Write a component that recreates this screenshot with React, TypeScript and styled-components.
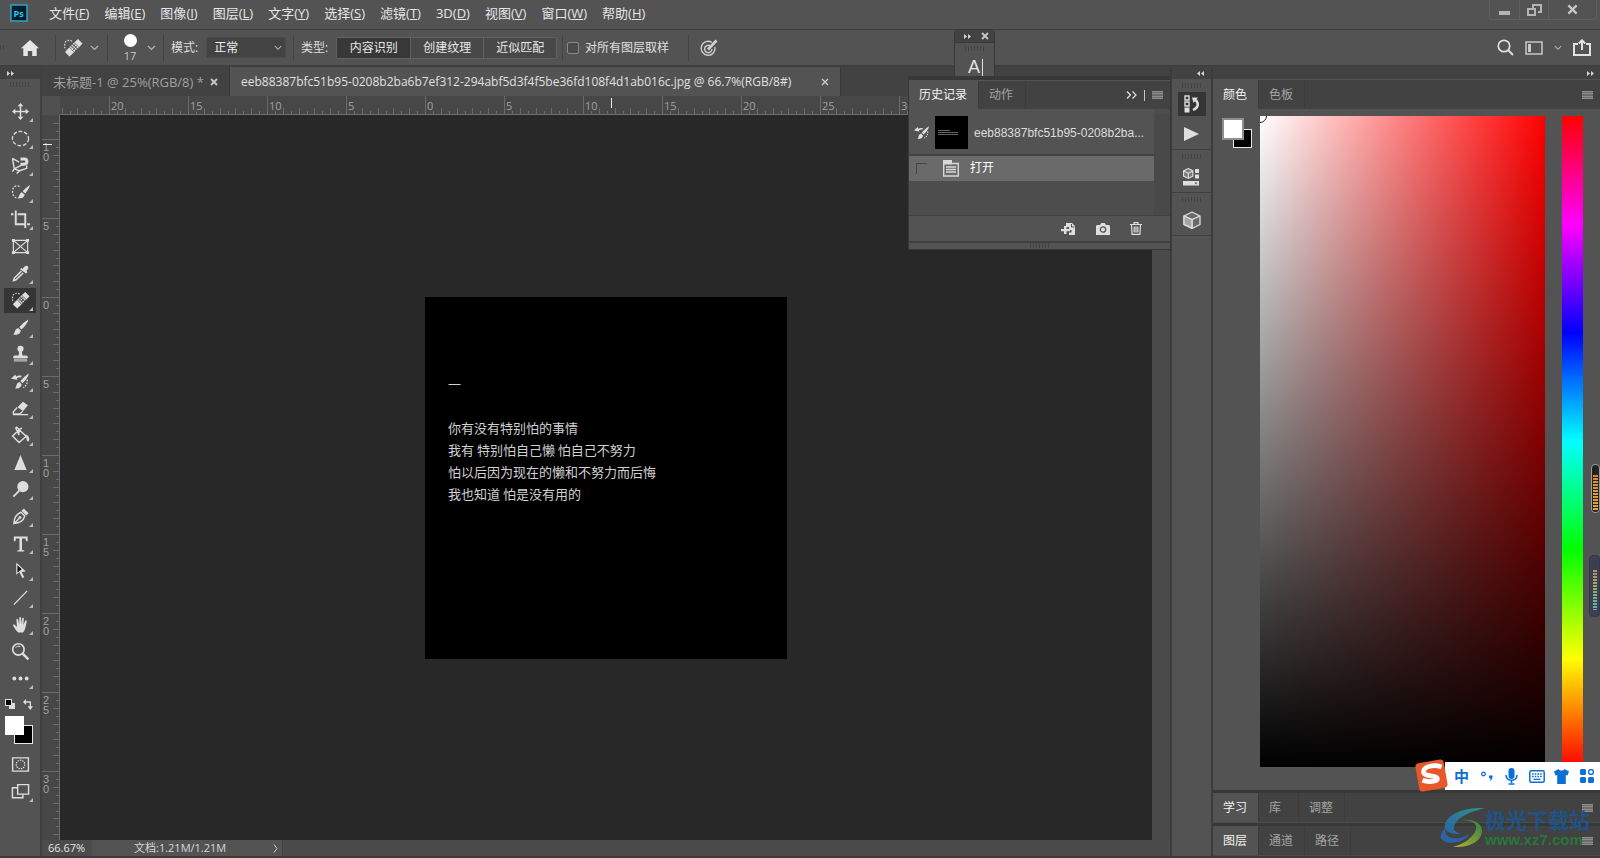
import React from "react";
import styled, { createGlobalStyle, css } from "styled-components";

const GlobalStyle = createGlobalStyle`
  *, *::before, *::after { box-sizing: border-box; }
  body { margin: 0; background: #535353; }
  button, select, input { font: inherit; color: inherit; margin: 0; }
  button { border: 0; background: none; padding: 0; cursor: default; }
  svg { display: block; flex: none; }
`;

const Shell = styled.div`
  position: relative;
  display: flex;
  flex-direction: column;
  height: 100vh;
  overflow: hidden;
  background: #535353;
  border-bottom: 2px solid #3a3a3a;
  color: #dcdcdc;
  font: 12px/16px "Open Sans", "Noto Sans CJK SC", sans-serif;
`;

/* ---------- menu bar ---------- */

const MenuBar = styled.header`
  display: flex;
  align-items: center;
  height: 30px;
  flex: none;
  padding: 0 0 3px 10px;
  border-bottom: 1px solid #3d3d3d;
`;

const Menus = styled.nav`
  display: flex;
  gap: 15px;
  flex: 1;
  margin-left: 21px;
  font-size: 13px;
  line-height: 18px;
  color: #e6e6e6;
`;

const WindowControls = styled.div`
  display: flex;
  align-self: flex-start;
  height: 20px;
  margin-right: 3px;
  border: 1px solid #5f5f5f;
  border-top: 0;
  border-radius: 0 0 4px 4px;
`;

const WindowButton = styled.button<{ $wide?: boolean }>`
  display: flex;
  align-items: center;
  justify-content: center;
  width: ${(p) => (p.$wide ? 48 : 29)}px;
  color: #c4c4c4;
  & + & { border-left: 1px solid #5f5f5f; }
`;

/* ---------- options bar ---------- */

const OptionsBar = styled.div`
  display: flex;
  align-items: center;
  height: 37px;
  flex: none;
  border-bottom: 2px solid #3f3f3f;
`;

const OptionGroup = styled.div<{ $w?: number; $gap?: number; $pad?: number }>`
  display: flex;
  align-items: center;
  gap: ${(p) => p.$gap ?? 8}px;
  height: 26px;
  width: ${(p) => (p.$w ? p.$w + "px" : "auto")};
  padding-left: ${(p) => p.$pad ?? 7}px;
  border-left: 1px solid #434343;
`;

const HomeButton = styled.button`
  display: flex;
  justify-content: center;
  align-items: center;
  width: 50px;
`;

const IconButton = styled.button`
  display: flex;
  align-items: center;
  justify-content: center;
`;

const BrushPreview = styled.button`
  display: flex;
  flex-direction: column;
  align-items: center;
  gap: 3px;
  width: 30px;
  font-size: 11px;
  line-height: 12px;
  color: #c8c8c8;
  &::before {
    content: "";
    width: 13px;
    height: 13px;
    border-radius: 50%;
    background: #fff;
  }
`;

const SelectBox = styled.div`
  display: flex;
  align-items: center;
  width: 80px;
  height: 21px;
  padding-right: 3px;
  background: #434343;
  border: 1px solid #4a4a4a;
  border-radius: 2px;
  svg { pointer-events: none; margin-left: -11px; }
`;

const Select = styled.select`
  appearance: none;
  flex: 1;
  min-width: 0;
  height: 19px;
  padding: 0 0 0 7px;
  border: 0;
  background: none;
  color: #f0f0f0;
`;

const Segmented = styled.div`
  display: flex;
  height: 22px;
  border: 1px solid #626262;
  border-radius: 2px;
`;

const Segment = styled.button<{ $on?: boolean }>`
  width: 73px;
  background: ${(p) => (p.$on ? "#383838" : "#484848")};
  color: #e8e8e8;
  & + & { border-left: 1px solid #626262; }
`;

const CheckLabel = styled.label`
  display: flex;
  align-items: center;
  gap: 6px;
  color: #e0e0e0;
`;

const Checkbox = styled.input`
  appearance: none;
  width: 12px;
  height: 12px;
  border: 1px solid #8a8a8a;
  border-radius: 2px;
  background: #4a4a4a;
`;

const OptionsEnd = styled.div`
  display: flex;
  align-items: center;
  margin-left: auto;
  padding-right: 9px;
  gap: 11px;
`;

/* ---------- workspace ---------- */

const Workspace = styled.div`
  display: flex;
  flex: 1;
  min-height: 0;
`;

const StripHeader = styled.div<{ $end?: boolean }>`
  display: flex;
  align-items: center;
  flex: none;
  height: 12px;
  padding: 0 6px;
  background: #424242;
  color: #cfcfcf;
  justify-content: ${(p) => (p.$end ? "flex-end" : "flex-start")};
`;

const Grip = styled.div<{ $w?: number; $m?: string }>`
  flex: none;
  width: ${(p) => p.$w ?? 20}px;
  height: 5px;
  margin: ${(p) => p.$m ?? "0 auto"};
  background: repeating-linear-gradient(to right, #444 0 1px, transparent 1px 3px);
`;

const ToolColumn = styled.aside`
  display: flex;
  flex-direction: column;
  flex: none;
  width: 42px;
  border-right: 2px solid #404040;
`;

const ToolList = styled.div`
  display: flex;
  flex-direction: column;
  margin-top: 11px;
`;

const Tool = styled.button<{ $active?: boolean; $more?: boolean }>`
  display: flex;
  align-items: center;
  justify-content: center;
  position: relative;
  width: 32px;
  height: 25px;
  margin: 1px 4px;
  background: ${(p) => (p.$active ? "#353535" : "none")};
  ${(p) =>
    p.$more &&
    css`
      &::after {
        content: "";
        position: absolute;
        right: 3px;
        bottom: 2px;
        border: 2px solid transparent;
        border-right-color: #bdbdbd;
        border-bottom-color: #bdbdbd;
      }
    `}
`;

const SwatchMini = styled.div`
  display: flex;
  justify-content: space-between;
  padding: 0 7px 0 5px;
  margin-top: 7px;
`;

const Swatches = styled.div<{ $m?: string; $s: number }>`
  position: relative;
  flex: none;
  width: ${(p) => p.$s}px;
  height: ${(p) => p.$s}px;
  margin: ${(p) => p.$m ?? "0"};
`;

const Fore = styled.button<{ $ring?: boolean }>`
  position: absolute;
  left: 0;
  top: 0;
  width: ${(p) => (p.$ring ? 22 : 19)}px;
  height: ${(p) => (p.$ring ? 22 : 19)}px;
  background: #fff;
  border: ${(p) => (p.$ring ? "2px solid #8e8e8e" : "0")};
`;

const Back = styled.button`
  position: absolute;
  right: 0;
  bottom: 0;
  width: 19px;
  height: 19px;
  background: #000;
  border: 1px solid #e8e8e8;
`;

const DocumentArea = styled.main`
  display: flex;
  flex-direction: column;
  flex: 1;
  min-width: 0;
`;

const DocTabs = styled.div`
  display: flex;
  flex: none;
  height: 29px;
  background: #424242;
`;

const DocTab = styled.div<{ $active?: boolean }>`
  display: flex;
  align-items: center;
  padding: 0 11px;
  width: ${(p) => (p.$active ? 611 : 188)}px;
  flex: none;
  justify-content: space-between;
  border-right: 1px solid #383838;
  background: ${(p) => (p.$active ? "#535353" : "#424242")};
  color: ${(p) => (p.$active ? "#e0e0e0" : "#a0a0a0")};
  font-size: ${(p) => (p.$active ? 12 : 13)}px;
  white-space: nowrap;
`;

const RulerRow = styled.div`
  display: flex;
  flex: none;
  height: 19px;
  overflow: hidden;
  background: #474747;
`;

const RulerCorner = styled.div`
  width: 18px;
  flex: none;
  background: #505050;
`;

const RulerTop = styled.div`
  flex: 1;
  min-width: 0;
  overflow: hidden;
  border-bottom: 1px solid #6e6e6e;
`;

const CanvasRow = styled.div`
  display: flex;
  flex: 1;
  min-height: 0;
`;

const RulerSide = styled.div`
  flex: none;
  width: 18px;
  overflow: hidden;
  background: #474747;
  border-right: 1px solid #6e6e6e;
`;

const Canvas = styled.div`
  display: flex;
  flex: 1;
  align-items: center;
  justify-content: center;
  min-width: 0;
  background: #282828;
`;

const ScrollTrack = styled.div`
  flex: none;
  width: 18px;
  background: #4a4a4a;
`;

const Page = styled.article`
  width: 362px;
  height: 362px;
  padding: 76px 23px;
  background: #000;
  color: #d0d0d0;
  font-family: "Noto Sans CJK SC", sans-serif;
  font-size: 13px;
  line-height: 22px;
  white-space: pre;
  p { margin: 0; }
  p:first-child { margin-bottom: 22px; }
`;

const StatusBar = styled.footer`
  display: flex;
  align-items: center;
  flex: none;
  height: 16px;
  background: #4b4b4b;
  font-size: 11px;
  color: #e4e4e4;
`;

const ZoomLevel = styled.span`
  width: 50px;
  padding-left: 6px;
`;

const DocSize = styled.button`
  display: flex;
  align-items: center;
  justify-content: space-between;
  width: 191px;
  height: 16px;
  padding: 0 4px 0 42px;
  background: #535353;
  border-right: 1px solid #434343;
  color: #d6d6d6;
`;

/* ---------- dock ---------- */

const Dock = styled.aside`
  display: flex;
  flex-direction: column;
  flex: none;
  width: 43px;
  border-left: 2px solid #3c3c3c;
  border-right: 2px solid #3c3c3c;
`;

const DockGroup = styled.div`
  display: flex;
  flex-direction: column;
  align-items: center;
  padding: 4px 0 1px;
  gap: 4px;
  border-bottom: 1px solid #3f3f3f;
`;

const DockButton = styled.button<{ $on?: boolean }>`
  display: flex;
  align-items: center;
  justify-content: center;
  width: 28px;
  height: ${(p) => (p.$on ? 24 : 28)}px;
  background: ${(p) => (p.$on ? "#353535" : "none")};
`;

const Panels = styled.aside`
  display: flex;
  flex-direction: column;
  flex: none;
  width: 387px;
`;

const PanelTabs = styled.div<{ $h: number; $stacked?: boolean }>`
  display: flex;
  flex: none;
  height: ${(p) => p.$h}px;
  background: #424242;
  margin-top: ${(p) => (p.$stacked ? 0 : 1)}px;
  border-top: ${(p) => (p.$stacked ? "3px solid #383838" : "0")};
  border-bottom: ${(p) => (p.$stacked ? "1px solid #4c4c4c" : "0")};
`;

const PanelTab = styled.button<{ $on?: boolean; $w?: number }>`
  padding: 0 11px 0 10px;
  width: ${(p) => (p.$w ? p.$w + "px" : "auto")};
  text-align: left;
  background: ${(p) => (p.$on ? "#535353" : "none")};
  color: ${(p) => (p.$on ? "#f2f2f2" : "#a4a4a4")};
  border-right: 1px solid #3c3c3c;
`;

const TabEnd = styled.div`
  display: flex;
  align-items: center;
  gap: 7px;
  margin-left: auto;
  padding-right: 7px;
`;

const Divider = styled.span`
  width: 1px;
  height: 11px;
  background: #c8c8c8;
`;

const ColorBody = styled.div`
  display: flex;
  flex: 1;
  min-height: 0;
  padding: 7px 17px 23px 9px;
`;

const ColorField = styled.div`
  flex: 1;
  margin-left: 8px;
  overflow: hidden;
  background: linear-gradient(to top, #000, transparent),
    linear-gradient(to right, #fff, #f00);
`;

const HueStrip = styled.div`
  width: 21px;
  margin-left: 17px;
  background: linear-gradient(to bottom, #f00, #f0f 16.67%, #00f 33.33%, #0ff 50%, #0f0 66.67%, #ff0 83.33%, #f00);
`;

/* ---------- floating panels ---------- */

const MiniPanel = styled.section`
  position: absolute;
  top: 29px;
  right: 605px;
  width: 41px;
  height: 49px;
  border: 1px solid #383838;
  border-radius: 4px 4px 0 0;
  background: #535353;
`;

const MiniHeader = styled.div`
  display: flex;
  align-items: center;
  justify-content: space-between;
  height: 13px;
  padding: 0 5px 0 8px;
  background: #424242;
  border-radius: 3px 3px 0 0;
  border-bottom: 1px solid #383838;
`;

const HistoryPanel = styled.section`
  position: absolute;
  top: 76px;
  right: 429px;
  width: 263px;
  border: 1px solid #383838;
  border-top-width: 4px;
  background: #535353;
`;

const HistoryBody = styled.div`
  display: flex;
  height: 106px;
  background: #4d4d4d;
`;

const HistoryList = styled.ul`
  flex: 1;
  min-width: 0;
  margin: 0;
  padding: 0;
  list-style: none;
`;

const HistoryTrack = styled.div`
  width: 16px;
  margin-top: 5px;
  background: #494949;
`;

const Snapshot = styled.li`
  display: flex;
  align-items: center;
  height: 47px;
  padding: 2px 0 0 5px;
  background: #535353;
  border-bottom: 2px solid #434343;
  white-space: nowrap;
`;

const SnapshotName = styled.span`
  font-family: "Liberation Sans", sans-serif;
`;

const Thumb = styled.div`
  display: flex;
  flex-direction: column;
  justify-content: center;
  gap: 1px;
  width: 33px;
  height: 33px;
  margin: 0 6px 0 5px;
  padding: 0 10px 0 3px;
  background: #000;
  i { height: 1px; background: #666; }
  i:first-child { width: 12px; }
`;

const State = styled.li`
  display: flex;
  align-items: center;
  height: 25px;
  padding-left: 7px;
  background: #6a6a6a;
  color: #fff;
`;

const StateBox = styled.span`
  width: 11px;
  height: 11px;
  margin-right: 16px;
  border: 1px solid #444;
  border-right: 0;
  border-bottom: 0;
`;

const StateName = styled.span`
  padding-bottom: 2px;
  margin-left: 11px;
`;

const HistoryFooter = styled.div`
  display: flex;
  align-items: center;
  justify-content: flex-end;
  gap: 20px;
  height: 26px;
  padding-right: 28px;
  border-top: 1px solid #414141;
`;

const ResizeEdge = styled.div`
  height: 8px;
  border-top: 2px solid #404040;
`;

/* ---------- overlays ---------- */

const ImeBar = styled.div`
  position: absolute;
  right: 0;
  bottom: 66px;
  display: flex;
  align-items: center;
  justify-content: flex-end;
  gap: 8px;
  height: 28px;
  width: 155px;
  padding-right: 5px;
  background: #fff;
  color: #0b6fd6;
`;

const ImeLogo = styled.svg`
  margin: 0 -4px 2px -31px;
`;

const ImeKey = styled.button`
  display: flex;
  flex: none;
  align-items: center;
  justify-content: center;
  width: 17px;
  height: 20px;
`;

const ImeMode = styled(ImeKey)`
  font-family: "Noto Sans CJK SC", sans-serif;
  font-size: 15px;
  font-weight: 700;
`;

const Watermark = styled.div`
  position: absolute;
  right: 10px;
  bottom: 3px;
  display: flex;
  align-items: center;
  height: 50px;
  pointer-events: none;
  opacity: 0.85;
`;

const WatermarkText = styled.div`
  display: flex;
  flex-direction: column;
  margin-left: -1px;
  font: 700 21px/24px "Noto Sans CJK SC", sans-serif;
  color: #1b5791;
  span:last-child {
    font: 700 15px/18px "Liberation Sans", sans-serif;
    color: #23803a;
  }
`;

const Meter = styled.div<{ $top: number; $h: number; $cool?: boolean }>`
  position: absolute;
  right: 0;
  top: ${(p) => p.$top}px;
  width: ${(p) => (p.$cool ? 11 : 9)}px;
  height: ${(p) => p.$h}px;
  padding: ${(p) => (p.$cool ? "14px 2px 6px 3px" : "10px 1px 1px")};
  border: 1px solid ${(p) => (p.$cool ? "#34384a" : "#9b9b9b")};
  border-radius: 4px;
  background: ${(p) => (p.$cool ? "#3b3f50" : "#222")};
  &::before {
    content: "";
    display: block;
    height: 100%;
    background: repeating-linear-gradient(to bottom, transparent 0 2px, ${(p) => (p.$cool ? "#3b3f50" : "#222")} 2px 3px),
      ${(p) => (p.$cool ? "linear-gradient(#b98a6a, #a5a860 40%, #4fb8b8)" : "linear-gradient(#d98a2c, #e8a63c)")};
  }
`;

/* ---------- icons ---------- */

const C = "#dedede";

const Chevron = ({ s = 9 }: { s?: number }) => (
  <svg width={s} height={6} viewBox="0 0 9 6" fill="none" stroke="#b5b5b5" strokeWidth="1.2">
    <path d="M1 1l3.500 3.500L8 1" />
  </svg>
);

const Arrows = ({ flip }: { flip?: boolean }) => (
  <svg width="8" height="5" viewBox="0 0 8 5" fill="#d5d5d5">
    <path d={flip ? "M3 0v5L0 2.500zM7 0v5L4 2.500z" : "M1 0l3 2.500L1 5zM5 0l3 2.500L5 5z"} />
  </svg>
);

const Cross = ({ s = 8, w = 1.8 }: { s?: number; w?: number }) => (
  <svg width={s} height={s} viewBox="0 0 8 8" stroke="#c8c8c8" strokeWidth={w}>
    <path d="M1 1l6 6M7 1L1 7" />
  </svg>
);

const Lines = () => (
  <svg width="11" height="8" viewBox="0 0 11 8" fill="#8f8f8f">
    <path d="M0 0h11v8H0z" fill="#6c6c6c" />
    <path d="M0 0h11v1H0zM0 2h11v1H0zM0 5h11v1H0zM0 7h11v1H0z" />
  </svg>
);

const Cube = ({ s = 18 }: { s?: number }) => (
  <svg width={s} height={s} viewBox="0 0 18 18" stroke={C} strokeWidth="1.300" strokeLinejoin="round">
    <path d="M9 1l8 4v8.500L9 17.500 1 13.500V5z" fill="#6a6a6a" />
    <path d="M1 5l8 3.700L17 5M9 8.700v8.500" fill="none" />
    <path d="M1 5l8 3.700v8.300l-8-3.700z" fill="#a5a5a5" />
  </svg>
);

const art: Record<string, React.ReactNode> = {
  move: <path d="M10 1l3 3.600h-2.200v4.600h4.600V7L19 10l-3.600 3v-2.200h-4.600v4.600H13L10 19l-3-3.600h2.200v-4.600H4.600V13L1 10l3.600-3v2.200h4.600V4.600H7z" fill={C} />,
  ellipse: <ellipse cx="10" cy="10" rx="8.500" ry="7.500" fill="none" stroke={C} strokeWidth="1.300" strokeDasharray="4 1.900" />,
  lasso: (
    <g fill="none" stroke={C} strokeWidth="1.500">
      <path d="M1.500 2.500l2 11L12 9M1.500 2.500l7 4M3.500 13.500l-2 3M3.500 13.500l5.500 2-3 3M9 15.500l7.500-2.500V10" />
      <path d="M10 3.200h4a2.700 2.700 0 010 5.400h-4" strokeWidth="3.200" />
    </g>
  ),
  quick: (
    <g>
      <path d="M9 3.500C5 2 2 4 1.700 8s1 7.500 6.300 8" fill="none" stroke={C} strokeWidth="1.300" strokeDasharray="2 1.500" />
      <path d="M20 2c-.6 3-3 6.500-5 9l-2.700-2.200C14.500 6 17.500 3.500 20 2zM11.500 9.700l2.800 2.300c0 3.200-3 4.700-7 3.700 1.800-1 1-4.800 4.200-6z" fill={C} />
    </g>
  ),
  crop: <path d="M5 .5V15h9M0 4.500h2.500M7 4.500h8V19M17 15h3" fill="none" stroke={C} strokeWidth="2" />,
  frame: (
    <g fill="none" stroke={C} strokeWidth="1.200">
      <path d="M2.500 3.500h15v13h-15zM2.500 3.500l15 13M17.500 3.500l-15 13" />
      <path d="M1 2h3v3H1zM16 2h3v3h-3zM1 15h3v3H1zM16 15h3v3h-3z" fill={C} stroke="none" />
    </g>
  ),
  dropper: (
    <g>
      <path d="M11 7.500l-7.500 7.300-.8 2.600 2.600-.8 7.500-7.200" fill="none" stroke={C} strokeWidth="1.600" />
      <path d="M9.500 5.500l1.300-1.300 1.300 1.100C13.500 3 15 1.500 17 1.800c2 1.200 1.600 3-.7 5.300l1 1.500L16 10z" fill={C} />
    </g>
  ),
  heal: (
    <g>
      <path d="M9 3C5 1.500 2 3 1.700 6.500s0 3.500 1.600 5" fill="none" stroke={C} strokeWidth="1.200" strokeDasharray="1.500 1.500" />
      <path d="M15 1l4.500 4.500L16.300 9 11.500 4.300zM6.200 9.500L11 14.300 6.500 18.500 2 14z" fill={C} />
      <path d="M10.300 5.300l5 4.800M8.700 6.900l5 4.800M7.200 8.400l5 4.800" fill="none" stroke={C} strokeWidth="1.400" strokeDasharray="1.800 .6" />
      <path d="M11 4.600l5 4.800M6.700 9.100l5 4.800" fill="none" stroke={C} strokeWidth=".8" />
    </g>
  ),
  brush: <path d="M18.500 1.500c-1 3.700-4.500 8-7.500 10.500l-2.300-2.300C11.500 6.500 15 3 18.500 1.500zM7.600 10.600l2.600 2.600c0 3.300-3.700 5.300-8 4.300 2.300-1.500 1.500-5.900 5.400-6.900z" fill={C} />,
  stamp: (
    <g fill={C}>
      <circle cx="10" cy="4" r="3.300" />
      <path d="M8.700 6h2.600l.7 5h4c1.200 0 1.800 1 1.800 2.700H2.200C2.200 12 2.800 11 4 11h4z" />
      <path d="M3 14h14v3.500H3z" opacity=".6" />
    </g>
  ),
  history: (
    <g>
      <path d="M0 7L4.500 2.500l.8 2.300c2-1.200 4-1.300 6-.8L10.500 5.700c-2-.3-3 0-4.300 1l.5 1.500z" fill={C} />
      <path d="M19 1.500c-1 3.700-4 7.500-7 10.300L9.800 9.600C12.500 6.500 15.500 3 19 1.500zM8.800 10.600l2.400 2.400c0 3.300-3.200 5-7 4.300 2-1.500 1-5.700 4.600-6.700z" fill={C} />
      <path d="M17 8c.5 4-1 6.500-4 8.500" fill="none" stroke={C} strokeWidth="1.500" strokeDasharray="1.500 1.500" />
    </g>
  ),
  eraser: (
    <g>
      <path d="M12.500 3l5.300 3.700-5 6-6-4z" fill={C} />
      <path d="M6.500 9L2.500 13.500v2.300h6.700l3.300-3.300M2 16.500h16" fill="none" stroke={C} strokeWidth="1.400" />
    </g>
  ),
  bucket: (
    <g>
      <path d="M8.500 4L1.700 10.500l6.800 6.800 7.500-6.500zM5 2l3.300 7.500V3.500L6 1.300zM8.500 4l3-2" fill="none" stroke={C} strokeWidth="1.500" />
      <path d="M15.500 9c2.300.7 3.800 2.300 3.800 5.300 0 2.500-2.600 2.500-2.800.3z" fill={C} />
    </g>
  ),
  sharpen: <path d="M10 2l6.500 16h-13z" fill={C} />,
  dodge: (
    <g>
      <circle cx="12.500" cy="7" r="5.900" fill={C} />
      <path d="M9 11l-6.500 6.500" stroke={C} strokeWidth="2" />
    </g>
  ),
  pen: (
    <g>
      <path d="M3 17.500C3 12 4.500 8 10.500 5.500l4 4C13 15 9 17 3 17.500zM3.500 17l5.500-5.500" fill="none" stroke={C} strokeWidth="1.500" />
      <circle cx="9.500" cy="11" r="1.500" fill={C} />
      <path d="M11 4l2.500-2.500 5 5L16 9z" fill={C} />
    </g>
  ),
  type: <path d="M3 2.500h14.500v5h-1.500l-.8-2.700h-3.600v12l2.400.5v1.200h-7.500v-1.200l2.400-.5v-12H5.300l-.8 2.700H3z" fill={C} />,
  arrow: (
    <g>
      <path d="M5.500 1.500l10 9.500-5 .3z" fill={C} />
      <path d="M5.500 2v12.500l3.200-3L12 18l2-1-3-6 4-.2z" fill={C} />
      <path d="M6.800 4.500v7.500l4.500-3.300z" fill="#111" />
    </g>
  ),
  line: <path d="M3 17.500L17 3" stroke={C} strokeWidth="1.400" />,
  hand: <path d="M7.500 18.500c-2-1.800-4-5-5.500-8 .8-1 2-.5 2.700.5l1.600 1.700L5.700 5c.2-1.300 1.500-1.300 1.800 0L8.700 10V3c.3-1.200 1.600-1.200 1.900 0V9.700l1.200-6.200c.4-1.100 1.600-.9 1.700.3l-.5 6.700 2-4.500c.6-1 1.700-.6 1.600.6-.6 3-1.300 7.500-2.600 10l-1.300 1.900z" fill={C} />,
  zoom: (
    <g fill="none" stroke={C}>
      <circle cx="7.800" cy="7.800" r="6" strokeWidth="1.700" />
      <path d="M12.300 12.300l6 6" strokeWidth="2.600" />
      <path d="M5 6c1-1.700 3-2 4.700-1" strokeWidth="1" />
    </g>
  ),
  dots: (
    <g fill={C}>
      <circle cx="3.500" cy="10" r="2" />
      <circle cx="10" cy="10" r="2" />
      <circle cx="16.500" cy="10" r="2" />
    </g>
  ),
  mask: (
    <g fill="none" stroke={C}>
      <path d="M1.700 3h16.600v14H1.700z" strokeWidth="1.500" />
      <circle cx="10" cy="10" r="4.500" strokeWidth="1.300" strokeDasharray="1.500 1" />
    </g>
  ),
  screen: (
    <g stroke={C} strokeWidth="1.500">
      <path d="M1.500 6h11v10.500h-11z" fill="none" />
      <path d="M7 2.800h11.500v10H7z" fill="#535353" />
    </g>
  ),
};

const Icon = ({ name, size = 19 }: { name: string; size?: number }) => (
  <svg width={size} height={size} viewBox="0 0 20 20" aria-hidden="true">
    {art[name]}
  </svg>
);

/* ---------- rulers ---------- */

const STEP = 79;

const TopRuler = () => {
  const zero = 365;
  const ticks: number[] = [];
  for (let i = -46; i <= 95; i++) ticks.push(i);
  return (
    <svg width="1400" height="18" fontFamily="Open Sans, sans-serif" fontSize="11" fill="#a0a0a0">
      {ticks.map((i) => {
        const h = i % 10 === 0 ? 18 : i % 2 === 0 ? 6 : 3;
        return <rect key={i} x={Math.round(zero + (i * STEP) / 10)} y={18 - h} width="1" height={h} fill="#6a6a6a" />;
      })}
      {[20, 15, 10, 5, 0, 5, 10, 15, 20, 25, 30].map((n, k) => (
        <text key={k} x={zero + (k - 4) * STEP + 2} y="14">{n}</text>
      ))}
      <rect x="551" y="2" width="1" height="10" fill="#ececec" />
    </svg>
  );
};

const SideRuler = () => {
  const zero = 182;
  const ticks: number[] = [];
  for (let i = -22; i <= 90; i++) ticks.push(i);
  return (
    <svg width="17" height="900" fontFamily="Liberation Sans, sans-serif" fontSize="11" fill="#a0a0a0">
      {ticks.map((i) => {
        const w = i % 10 === 0 ? 17 : i % 2 === 0 ? 6 : 3;
        return <rect key={i} x={17 - w} y={Math.round(zero + (i * STEP) / 10)} width={w} height="1" fill="#6a6a6a" />;
      })}
      {["10", "5", "0", "5", "10", "15", "20", "25", "30"].map((n, k) => (
        <text key={k} y={zero + (k - 2) * STEP + 12}>
          {n.split("").map((d, j) => (
            <tspan key={j} x="1" dy={j ? 10 : 0}>{d}</tspan>
          ))}
        </text>
      ))}
      <rect x="1" y="29" width="9" height="1" fill="#ececec" />
    </svg>
  );
};

const menus: [string, string][] = [
  ["文件", "F"], ["编辑", "E"], ["图像", "I"], ["图层", "L"], ["文字", "Y"], ["选择", "S"],
  ["滤镜", "T"], ["3D", "D"], ["视图", "V"], ["窗口", "W"], ["帮助", "H"],
];

const tools = [
  "move", "ellipse", "lasso", "quick", "crop", "frame", "dropper", "heal", "brush", "stamp", "history",
  "eraser", "bucket", "sharpen", "dodge", "pen", "type", "arrow", "line", "hand", "zoom", "dots",
];

export default function App() {
  return (
    <Shell>
      <GlobalStyle />
      <MenuBar>
        <svg width="18" height="18" viewBox="0 0 18 18">
          <rect x="1" y="1" width="16" height="16" fill="#001d2b" stroke="#2fa3c4" strokeWidth="1.500" />
          <text x="3.500" y="12.500" fontSize="9" fontWeight="700" fontFamily="Open Sans, sans-serif" fill="#31c5f0">Ps</text>
        </svg>
        <Menus>
          {menus.map(([t, k]) => (
            <button key={k}>{t}(<u>{k}</u>)</button>
          ))}
        </Menus>
        <WindowControls>
          <WindowButton aria-label="最小化">
            <svg width="11" height="12"><rect y="7" width="11" height="4" fill="#b5b5b5" /></svg>
          </WindowButton>
          <WindowButton aria-label="还原">
            <svg width="15" height="12" viewBox="0 0 15 12" fill="none" stroke="#b5b5b5" strokeWidth="2">
              <path d="M6 4V1h8v7h-3" /><path d="M1 5h7v6H1z" />
            </svg>
          </WindowButton>
          <WindowButton $wide aria-label="关闭"><Cross s={11} w={1.6} /></WindowButton>
        </WindowControls>
      </MenuBar>

      <OptionsBar>
        <Grip $w={5} $m="0" />
        <HomeButton aria-label="主页">
          <svg width="18" height="16" viewBox="0 0 18 16" fill="#e6e6e6">
            <path d="M9 0l9 8.300h-2.300V16h-4.500v-5H6.800v5H2.300V8.300H0z" />
          </svg>
        </HomeButton>
        <OptionGroup $w={52} $gap={7}>
          <IconButton aria-label="污点修复画笔"><Icon name="heal" size={20} /></IconButton>
          <Chevron />
        </OptionGroup>
        <OptionGroup $w={56} $gap={2}>
          <BrushPreview>17</BrushPreview>
          <Chevron />
        </OptionGroup>
        <OptionGroup $w={130}>
          <label htmlFor="mode">模式:</label>
          <SelectBox>
            <Select id="mode" defaultValue="正常"><option>正常</option></Select>
            <Chevron s={8} />
          </SelectBox>
        </OptionGroup>
        <OptionGroup $w={269}>
          <span>类型:</span>
          <Segmented>
            <Segment $on>内容识别</Segment>
            <Segment>创建纹理</Segment>
            <Segment>近似匹配</Segment>
          </Segmented>
        </OptionGroup>
        <OptionGroup $w={126} $pad={4}>
          <CheckLabel><Checkbox type="checkbox" />对所有图层取样</CheckLabel>
        </OptionGroup>
        <OptionGroup>
          <IconButton aria-label="压力控制大小">
            <svg width="28" height="18" viewBox="0 0 28 18" fill="none" stroke="#d0d0d0" strokeWidth="1.400">
              <path d="M16 3.500A7 7 0 1019 8" /><path d="M14 6.700a3.700 3.700 0 102 3.300" />
              <path d="M12 10.500l8.500-9" strokeWidth="2.600" />
            </svg>
          </IconButton>
        </OptionGroup>
        <OptionsEnd>
          <IconButton aria-label="搜索">
            <svg width="17" height="17" viewBox="0 0 17 17" fill="none" stroke={C} strokeWidth="1.700">
              <circle cx="7" cy="7" r="5.700" /><path d="M11 11l5 5" strokeWidth="2" />
            </svg>
          </IconButton>
          <IconButton aria-label="工作区">
            <svg width="18" height="14" viewBox="0 0 18 14" fill="none" stroke="#c8c8c8" strokeWidth="1.500">
              <path d="M1 1h16v12H1z" /><path d="M3 3h3v8H3z" fill="#c8c8c8" stroke="none" />
            </svg>
          </IconButton>
          <Chevron s={8} />
          <IconButton aria-label="共享">
            <svg width="18" height="17" viewBox="0 0 18 17" fill="none" stroke="#e2e2e2" strokeWidth="2">
              <path d="M5 5H1v11h16V5h-4M9 11V2M5.800 4.500L9 1.300l3.200 3.200" />
            </svg>
          </IconButton>
        </OptionsEnd>
      </OptionsBar>

      <Workspace>
        <ToolColumn>
          <StripHeader><Arrows /></StripHeader>
          <Grip $m="3px auto 0" />
          <ToolList>
            {tools.map((t) => (
              <Tool key={t} aria-label={t} $active={t === "heal"} $more={!["frame", "zoom"].includes(t)}>
                <Icon name={t} />
              </Tool>
            ))}
          </ToolList>
          <SwatchMini>
            <svg width="11" height="11"><rect x="4" y="4" width="6" height="6" fill={C} /><rect x=".5" y=".5" width="6" height="6" fill="#000" stroke={C} /></svg>
            <svg width="10" height="11" viewBox="0 0 10 11" fill={C}><path d="M0 3l3-3v2.300h5v5h2L7.300 11 4.700 7.300h2V3.700H3V6z" /></svg>
          </SwatchMini>
          <Swatches $s={28} $m="6px 0 7px 5px"><Back aria-label="背景色" /><Fore aria-label="前景色" /></Swatches>
          <Tool aria-label="快速蒙版"><Icon name="mask" /></Tool>
          <Tool aria-label="屏幕模式" $more><Icon name="screen" /></Tool>
        </ToolColumn>

        <DocumentArea>
          <DocTabs>
            <DocTab><span>未标题-1 @ 25%(RGB/8) *</span><IconButton aria-label="关闭"><Cross /></IconButton></DocTab>
            <DocTab $active>
              <span>eeb88387bfc51b95-0208b2ba6b7ef312-294abf5d3f4f5be36fd108f4d1ab016c.jpg @ 66.7%(RGB/8#)</span>
              <IconButton aria-label="关闭"><Cross w={1.4} /></IconButton>
            </DocTab>
          </DocTabs>
          <RulerRow><RulerCorner /><RulerTop><TopRuler /></RulerTop></RulerRow>
          <CanvasRow>
            <RulerSide><SideRuler /></RulerSide>
            <Canvas>
              <Page>
                <p>一</p>
                <p>你有没有特别怕的事情</p>
                <p>我有 特别怕自己懒 怕自己不努力</p>
                <p>怕以后因为现在的懒和不努力而后悔</p>
                <p>我也知道 怕是没有用的</p>
              </Page>
            </Canvas>
            <ScrollTrack />
          </CanvasRow>
          <StatusBar>
            <ZoomLevel>66.67%</ZoomLevel>
            <DocSize>
              <span>文档:1.21M/1.21M</span>
              <svg width="5" height="9" viewBox="0 0 5 9" fill="none" stroke="#c8c8c8"><path d="M1 .5l3 4-3 4" /></svg>
            </DocSize>
          </StatusBar>
        </DocumentArea>

        <Dock>
          <StripHeader $end><Arrows flip /></StripHeader>
          <DockGroup>
            <Grip />
            <DockButton $on aria-label="历史记录">
              <svg width="16" height="18" viewBox="0 0 16 18" fill="none" stroke={C} strokeWidth="1.400">
                <path d="M1 1h4v4H1zM1 7h4v4H1z" /><path d="M.5 12.500h5v5h-5z" fill={C} stroke="none" />
                <path d="M9 15c5-2 6.500-6.500 2.500-10" strokeWidth="2.400" /><path d="M8 2.500h6L9.500 8z" fill={C} stroke="none" />
              </svg>
            </DockButton>
            <DockButton aria-label="动作">
              <svg width="15" height="16" viewBox="0 0 15 16" fill={C}><path d="M0 1l15 7-15 7z" /></svg>
            </DockButton>
          </DockGroup>
          <DockGroup>
            <Grip />
            <DockButton aria-label="属性">
              <svg width="17" height="18" viewBox="0 0 17 18">
                <g transform="scale(.58)"><path d="M9 1l8 4v9l-8 4-8-4V5z" fill="#777" stroke={C} strokeWidth="2" /><path d="M1 5l8 4 8-4M9 9v8" fill="none" stroke={C} strokeWidth="2" /></g>
                <path d="M12 1h4v4h-4zM12 6.500h4v4h-4zM0 13h16v4.500H0z" fill={C} />
                <path d="M11.500 14.500h3L13 16.500z" fill="#535353" />
              </svg>
            </DockButton>
          </DockGroup>
          <DockGroup>
            <Grip />
            <DockButton aria-label="3D"><Cube /></DockButton>
          </DockGroup>
        </Dock>

        <Panels>
          <StripHeader $end><Arrows /></StripHeader>
          <PanelTabs $h={29}>
            <PanelTab $on>颜色</PanelTab>
            <PanelTab>色板</PanelTab>
            <TabEnd><Lines /></TabEnd>
          </PanelTabs>
          <ColorBody>
            <Swatches $s={30} $m="2px 0 0"><Back aria-label="背景色" /><Fore $ring aria-label="前景色" /></Swatches>
            <ColorField>
              <svg width="8" height="8" fill="none" stroke="#222"><circle cx="0" cy="0" r="6.500" /></svg>
            </ColorField>
            <HueStrip />
          </ColorBody>
          <PanelTabs $h={33} $stacked>
            <PanelTab $on>学习</PanelTab>
            <PanelTab $w={40}>库</PanelTab>
            <PanelTab>调整</PanelTab>
            <TabEnd><Lines /></TabEnd>
          </PanelTabs>
          <PanelTabs $h={33} $stacked>
            <PanelTab $on>图层</PanelTab>
            <PanelTab>通道</PanelTab>
            <PanelTab>路径</PanelTab>
            <TabEnd><Lines /></TabEnd>
          </PanelTabs>
        </Panels>
      </Workspace>

      <MiniPanel>
        <MiniHeader><Arrows /><Cross /></MiniHeader>
        <Grip $m="3px auto 0" />
        <svg width="39" height="26" viewBox="0 0 39 26" fill="#e2e2e2">
          <text x="13" y="22" fontSize="18" fontFamily="Liberation Sans, sans-serif">A</text>
          <rect x="27" y="8" width="1" height="17" />
        </svg>
      </MiniPanel>

      <HistoryPanel>
        <PanelTabs $h={28}>
          <PanelTab $on $w={70}>历史记录</PanelTab>
          <PanelTab $w={47}>动作</PanelTab>
          <TabEnd>
            <svg width="11" height="8" viewBox="0 0 11 8" fill="none" stroke={C} strokeWidth="1.300"><path d="M1 .5L4.500 4 1 7.500M6.500 .5L10 4 6.500 7.500" /></svg>
            <Divider />
            <Lines />
          </TabEnd>
        </PanelTabs>
        <HistoryBody>
          <HistoryList>
            <Snapshot>
              <Icon name="history" size={16} />
              <Thumb><i /><i /><i /></Thumb>
              <SnapshotName>eeb88387bfc51b95-0208b2ba...</SnapshotName>
            </Snapshot>
            <State>
              <StateBox />
              <svg width="16" height="17" viewBox="0 0 16 17" fill="none" stroke="#d8d8d8">
                <path d="M.7 1v15h14.600V3.500H9" strokeWidth="1.400" /><path d="M0 0h9v4.500H0z" fill="#d8d8d8" stroke="none" />
                <path d="M3 7h10M3 9.500h10M3 12h10" strokeWidth="1.300" />
              </svg>
              <StateName>打开</StateName>
            </State>
          </HistoryList>
          <HistoryTrack />
        </HistoryBody>
        <HistoryFooter>
          <IconButton aria-label="从当前状态创建新文档">
            <svg width="15" height="12" viewBox="0 0 15 12" fill={C}>
              <path d="M5 0h6l3 3v9H8V9.500h2.500V7H8V4H5zM0 6h3V3h2.500v3H9v2.300H5.500V11H3V8.300H0z" />
              <path d="M10.500 1v3h3" fill="none" stroke="#535353" />
            </svg>
          </IconButton>
          <IconButton aria-label="创建新快照">
            <svg width="14" height="12" viewBox="0 0 14 12">
              <path d="M1 2h3l1.300-2h3.400L10 2h3l1 1v9H0V3z" fill={C} /><circle cx="7" cy="6.500" r="2.700" fill="none" stroke="#535353" strokeWidth="1.300" />
            </svg>
          </IconButton>
          <IconButton aria-label="删除">
            <svg width="12" height="13" viewBox="0 0 12 13" fill="none" stroke={C} strokeWidth="1.200">
              <path d="M0 2.500h12M4 2.500V.6h4v1.900M1.500 3l.6 9.400h7.800L10.500 3M4.200 4.500v6M6 4.500v6M7.800 4.500v6" />
            </svg>
          </IconButton>
        </HistoryFooter>
        <ResizeEdge><Grip /></ResizeEdge>
      </HistoryPanel>

      <Meter $top={464} $h={49} />
      <Meter $top={555} $h={62} $cool />

      <Watermark>
        <svg width="46" height="42" viewBox="0 0 46 42">
          <defs>
            <linearGradient id="wa" x1="0" y1="1" x2="1" y2="0"><stop offset="0" stopColor="#2769b5" /><stop offset="1" stopColor="#2aa39a" /></linearGradient>
            <linearGradient id="wb" x1="0" y1="1" x2="1" y2="0"><stop offset="0" stopColor="#c8c32f" /><stop offset="1" stopColor="#2f8f3e" /></linearGradient>
          </defs>
          <path d="M45 1C28 0 9 5 5 17c-2 7 5 11 17 10-7-1-10-5-7-10C19 9 32 4 45 1z" fill="url(#wa)" />
          <path d="M22 13c12 0 17 5 13 12-5 8-12 12-22 15 17 1 28-6 29-15 1-8-8-13-20-12z" fill="url(#wb)" />
          <path d="M5 21c-7 7-6 15 7 15 9-1 15-4 17-9-6 4-11 5-16 4-6-1-8-4-8-10z" fill="#2769b5" />
        </svg>
        <WatermarkText><span>极光下载站</span><span>www.xz7.com</span></WatermarkText>
      </Watermark>

      <ImeBar>
        <ImeLogo width="35" height="35" viewBox="0 0 33 33">
          <rect x="3" y="3" width="27" height="27" rx="3" fill="#e8572a" transform="rotate(-10 16.500 16.500)" />
          <path d="M26 8.500c-7-2.500-17-1-17 4.500 0 5 13 3 13 6.500 0 3-9 3.500-14 1.500" fill="none" stroke="#fff" strokeWidth="4.500" />
        </ImeLogo>
        <ImeMode>中</ImeMode>
        <ImeKey aria-label="标点">
          <svg width="14" height="14" viewBox="0 0 14 14"><circle cx="3.500" cy="5" r="1.800" fill="none" stroke="currentColor" strokeWidth="1.300" /><path d="M9 6.500h3.500c.3 3-1 5-3 5.500 1-1.200 1-2 .9-2.700H9z" fill="currentColor" /></svg>
        </ImeKey>
        <ImeKey aria-label="语音">
          <svg width="13" height="17" viewBox="0 0 13 17"><rect x="3.500" y="0" width="6" height="11" rx="3" fill="currentColor" /><path d="M1 7c0 7 11 7 11 0M6.500 12v3M3.500 16h6" fill="none" stroke="currentColor" strokeWidth="1.600" /></svg>
        </ImeKey>
        <ImeKey aria-label="键盘">
          <svg width="16" height="13" viewBox="0 0 16 13" fill="none" stroke="currentColor"><rect x=".8" y=".8" width="14.400" height="11.400" rx="1.500" strokeWidth="1.500" /><path d="M3 4h10M3 6.500h10" strokeWidth="1.500" strokeDasharray="1.600 1.100" /><path d="M4.500 9.300h7" strokeWidth="1.300" /></svg>
        </ImeKey>
        <ImeKey aria-label="皮肤">
          <svg width="15" height="15" viewBox="0 0 15 15" fill="currentColor"><path d="M4.500 0c1 2 5 2 6 0L15 2.500l-1.500 4-1.700-.5v9H3.200V6l-1.700.5L0 2.500z" /></svg>
        </ImeKey>
        <ImeKey aria-label="工具箱">
          <svg width="14" height="14" viewBox="0 0 14 14" fill="currentColor"><rect width="6" height="6" rx="1.500" /><rect x="8.700" y=".7" width="4.600" height="4.600" rx="1.500" fill="none" stroke="currentColor" strokeWidth="1.400" /><rect y="8" width="6" height="6" rx="1.500" /><rect x="8" y="8" width="6" height="6" rx="1.500" /></svg>
        </ImeKey>
      </ImeBar>
    </Shell>
  );
}
